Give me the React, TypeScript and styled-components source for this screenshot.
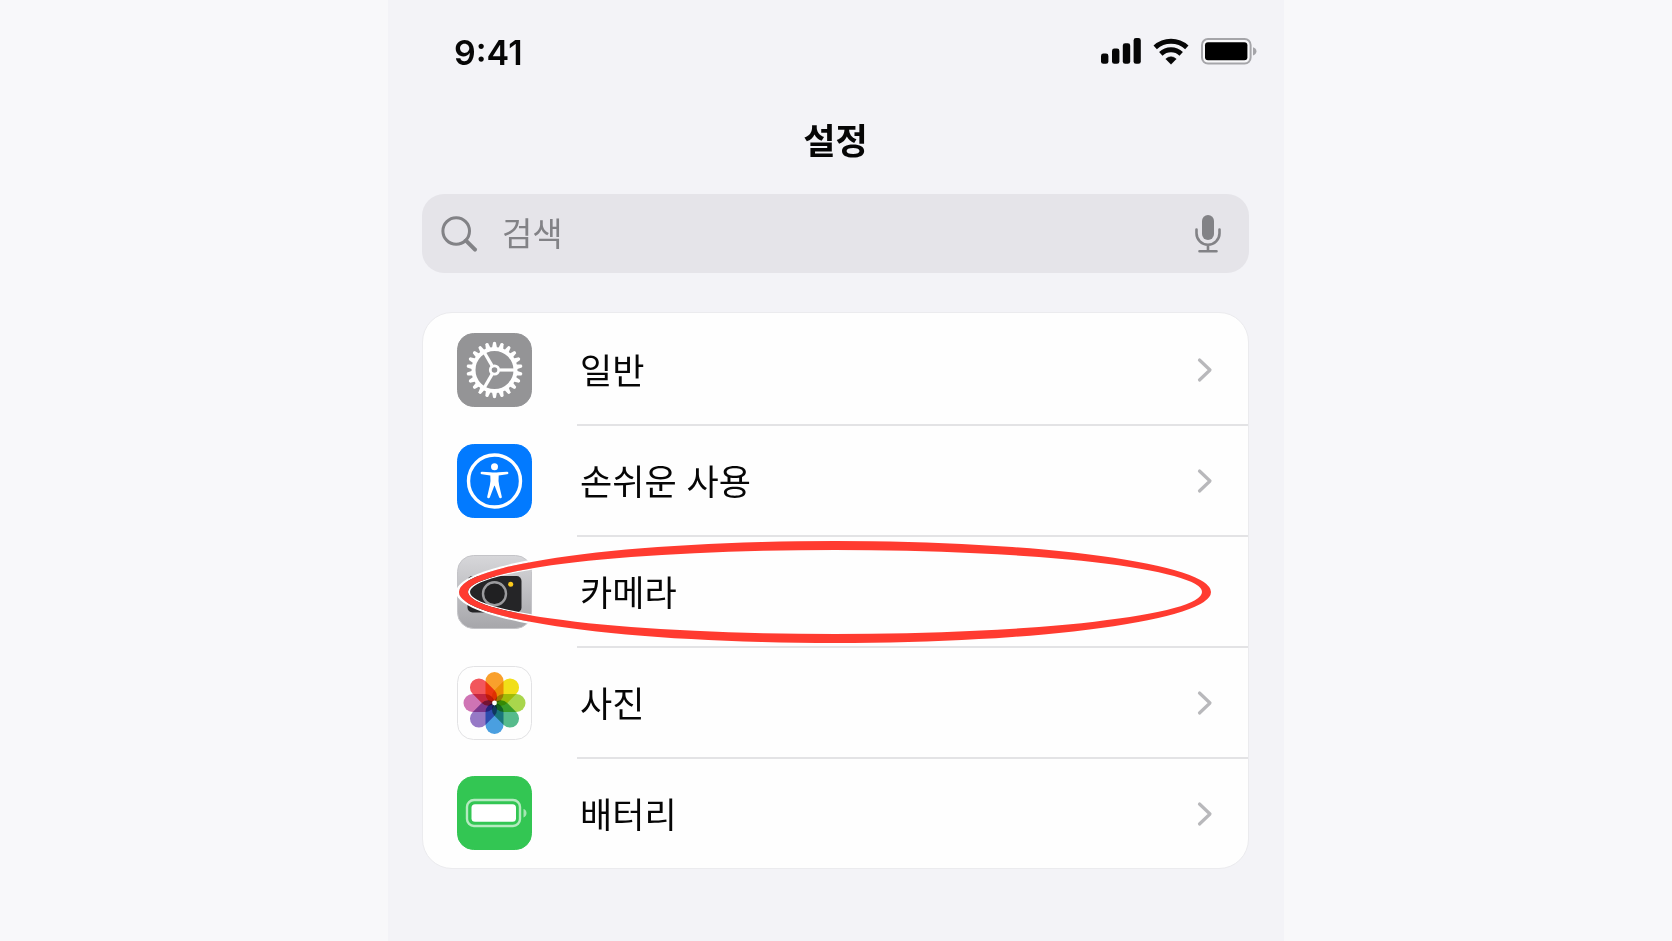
import React from "react";
import styled, { createGlobalStyle } from "styled-components";

const GlobalStyle = createGlobalStyle`
  *, *::before, *::after { box-sizing: border-box; }
  body {
    margin: 0;
    background: #f8f8fa;
    color: #060606;
    font-family: Inter, "Noto Sans CJK KR", sans-serif;
  }
`;

const Screen = styled.main`
  width: 100%;
  max-width: 896px;
  min-height: 100vh;
  margin: 0 auto;
  padding: 0 35px 72px 34px;
  background: #f3f3f7;
`;

const StatusBar = styled.header`
  display: flex;
  align-items: center;
  justify-content: space-between;
  padding: 33px 0 0 32px;
  height: 73px;
`;

const Clock = styled.time`
  font-size: 34px;
  line-height: 40px;
  font-weight: 600;
`;

const StatusIcons = styled.div`
  display: flex;
  align-items: center;
  gap: 12px;
  margin: 0 -8px 4px 0;
`;

const Title = styled.h1`
  margin: 44px 0 29px;
  font-size: 35px;
  line-height: 48px;
  font-weight: 700;
  text-align: center;
`;

const SearchField = styled.label`
  display: flex;
  align-items: center;
  height: 79px;
  padding: 0 27px 0 18px;
  border-radius: 22px;
  background: #e5e4e9;
  color: #828286;
`;

const SearchInput = styled.input`
  flex: 1;
  min-width: 0;
  margin: 0 24px;
  padding: 0;
  border: 0;
  outline: 0;
  background: none;
  color: #060606;
  font: inherit;
  font-size: 33px;
  line-height: 48px;
  &::placeholder { color: #828286; opacity: 1; }
`;

const MicButton = styled.button`
  display: flex;
  padding: 0;
  border: 0;
  background: none;
  color: inherit;
`;

const List = styled.ul`
  margin: 39px 0 0;
  padding: 2px 0 0;
  list-style: none;
  border: 1px solid #ebebee;
  border-radius: 30px;
  background: #fefefe;
`;

const Item = styled.li`
  position: relative;
`;

const RowLink = styled.a`
  display: flex;
  align-items: center;
  gap: 45px;
  padding-left: 34px;
  color: inherit;
  text-decoration: none;
`;

const RowBody = styled.span<{ $divided: boolean }>`
  display: flex;
  flex: 1;
  box-sizing: content-box;
  align-items: center;
  justify-content: space-between;
  height: 109px;
  padding: 0 35px 0 3px;
  border-bottom: ${(p) => (p.$divided ? "2px solid #e3e3e5" : "0")};
`;

const RowLabel = styled.span`
  font-size: 35px;
  line-height: 48px;
  padding-top: 2px;
`;

const Highlight = styled.span`
  position: absolute;
  top: 4px;
  left: 36px;
  right: 37px;
  height: 102px;
  border: 9px solid #ff3b30;
  border-radius: 50%;
  box-shadow: 0 0 0 3px #fefefe, inset 0 0 0 2px #fefefe;
  pointer-events: none;
`;

function SignalIcon() {
  return (
    <svg width="40" height="26" viewBox="0 0 40 26" fill="#060606" aria-hidden="true">
      <rect x="0" y="15.5" width="7.4" height="10.3" rx="2.4" />
      <rect x="11" y="10.5" width="7.4" height="15.3" rx="2.4" />
      <rect x="21.8" y="5.3" width="7.4" height="20.5" rx="2.4" />
      <rect x="32.6" y="0" width="7.2" height="25.8" rx="2.4" />
    </svg>
  );
}

function WifiIcon() {
  return (
    <svg width="36" height="27" viewBox="0 0 36 27" aria-hidden="true">
      <g fill="none" stroke="#060606" strokeWidth="5">
        <path d="M2.2 9.3a23.4 23.4 0 0 1 31.6 0" />
        <path d="M7.8 15.8a15 15 0 0 1 20.4 0" />
      </g>
      <path d="M18 26.2l-5.2-5.3q5.2-4.2 10.4 0z" fill="#060606" stroke="#060606" strokeWidth="0.6" strokeLinejoin="round" />
    </svg>
  );
}

function StatusBatteryIcon() {
  return (
    <svg width="56" height="27" viewBox="0 0 56 27" aria-hidden="true">
      <rect x="1" y="1" width="48.6" height="24.6" rx="6" fill="#f8f8fa" stroke="#a5a5a9" strokeWidth="2" />
      <rect x="4" y="4.3" width="42.4" height="18" rx="3" fill="#000" />
      <path d="M52 9.2c4.6 1.2 4.6 7 0 8.2z" fill="#a5a5a9" />
    </svg>
  );
}

function SearchIcon() {
  return (
    <svg width="38" height="38" viewBox="0 0 38 38" fill="none" stroke="currentColor" aria-hidden="true">
      <circle cx="16.2" cy="16" r="13.3" strokeWidth="3" />
      <path d="M26 25.7l9 9" strokeWidth="4" strokeLinecap="round" />
    </svg>
  );
}

function MicIcon() {
  return (
    <svg width="28" height="40" viewBox="0 0 28 40" fill="none" stroke="currentColor" strokeWidth="2.6" strokeLinecap="round" aria-hidden="true">
      <rect x="8" y="1" width="12" height="25" rx="6" fill="currentColor" stroke="none" />
      <path d="M2.5 15.5v3.8a11.5 11.5 0 0 0 23 0v-3.8M14 31v6M5.5 37.3h17" />
    </svg>
  );
}

function Chevron() {
  return (
    <svg width="16" height="26" viewBox="0 0 16 26" fill="none" stroke="#b8b8bb" strokeWidth="3.2" strokeLinecap="round" strokeLinejoin="round" aria-hidden="true">
      <path d="M2.5 3l10.5 10-10.5 10" />
    </svg>
  );
}

const TileSvg = styled.svg`
  flex: none;
  width: 75px;
  height: 74px;
  margin-bottom: 2px;
`;

function Tile({ fill, stroke, children }: { fill: string; stroke?: string; children: React.ReactNode }) {
  return (
    <TileSvg viewBox="0 0 75 74" aria-hidden="true">
      <rect x="0.5" y="0.5" width="74" height="73" rx="16" fill={fill} stroke={stroke ?? fill} />
      {children}
    </TileSvg>
  );
}

function GeneralIcon() {
  const teeth = Array.from({ length: 22 }, (_, i) => (i * 360) / 22);
  return (
    <Tile fill="#949496">
      <g transform="translate(37.5 37)" fill="none" stroke="#fff">
        <circle r="21" strokeWidth="4" />
        {teeth.map((angle) => (
          <path key={angle} d="M-2.5 -22L-1.5 -27.4Q0 -28.9 1.5 -27.4L2.5 -22z" fill="#fff" stroke="none" transform={`rotate(${angle})`} />
        ))}
        <circle r="4.2" strokeWidth="2.8" />
        {[90, 210, 330].map((angle) => (
          <path key={angle} d="M0 -5v-15" strokeWidth="3.2" transform={`rotate(${angle})`} />
        ))}
      </g>
    </Tile>
  );
}

function AccessibilityIcon() {
  return (
    <Tile fill="#027aff">
      <circle cx="37.5" cy="37" r="26" fill="none" stroke="#fff" strokeWidth="3.4" />
      <circle cx="37.5" cy="22.8" r="3.5" fill="#fff" />
      <path
        d="M25 27.7l8.2 0.6q4.3 0.4 8.6 0l8.2-0.6q1.4 0 1.4 1.3t-1.4 1.3l-8.3 1.2q-0.6 6 0.5 10l2.6 11.2q0.2 1.3-1 1.5t-1.7-1l-4.4-11.4h-0.4l-4.4 11.4q-0.5 1.2-1.7 1t-1-1.5l2.6-11.2q1.1-4 0.5-10l-8.3-1.2q-1.4 0-1.4-1.3t1.4-1.3z"
        fill="#fff"
      />
    </Tile>
  );
}

function CameraIcon() {
  return (
    <Tile fill="url(#camera-metal)" stroke="#c4c4c8">
      <defs>
        <linearGradient id="camera-metal" x1="0" y1="0" x2="0" y2="1">
          <stop offset="0" stopColor="#d7d7da" />
          <stop offset="1" stopColor="#a6a6aa" />
        </linearGradient>
      </defs>
      <rect x="10.5" y="21" width="54" height="36.5" rx="5" fill="#252527" />
      <circle cx="37.5" cy="38.8" r="11.5" fill="#202022" stroke="#9b9b9e" strokeWidth="2.4" />
      <circle cx="53.7" cy="29.3" r="2.5" fill="#fdcb1c" />
    </Tile>
  );
}

const petals = ["#f9a02c", "#f1df18", "#a9d64c", "#56bb8c", "#4a9fe0", "#9679c6", "#cf74b4", "#f2565c"];

const Petal = styled.rect`
  mix-blend-mode: multiply;
`;

const Flower = styled.g`
  isolation: isolate;
`;

function PhotosIcon() {
  return (
    <Tile fill="#fefefe" stroke="#e2e2e4">
      <Flower transform="translate(37.5 37)">
        {petals.map((color, i) => (
          <Petal key={color} x="-9" y="-31" width="18" height="31" rx="9" fill={color} transform={`rotate(${i * 45})`} />
        ))}
        <circle r="2.4" fill="#fff" />
      </Flower>
    </Tile>
  );
}

function BatteryIcon() {
  return (
    <Tile fill="#33c653">
      <rect x="10" y="24" width="53" height="26" rx="7" fill="none" stroke="#b5ebc0" strokeWidth="2.4" />
      <rect x="14.5" y="28.3" width="44.5" height="17.5" rx="3.5" fill="#fff" />
      <path d="M66.5 33c4 1 4 7.4 0 8.4z" fill="#a5e6b3" />
    </Tile>
  );
}

const rows = [
  { label: "일반", Icon: GeneralIcon },
  { label: "손쉬운 사용", Icon: AccessibilityIcon },
  { label: "카메라", Icon: CameraIcon, highlighted: true },
  { label: "사진", Icon: PhotosIcon },
  { label: "배터리", Icon: BatteryIcon },
];

export default function App() {
  return (
    <>
      <GlobalStyle />
      <Screen>
        <StatusBar>
          <Clock>9:41</Clock>
          <StatusIcons>
            <SignalIcon />
            <WifiIcon />
            <StatusBatteryIcon />
          </StatusIcons>
        </StatusBar>
        <Title>설정</Title>
        <SearchField>
          <SearchIcon />
          <SearchInput type="text" placeholder="검색" aria-label="검색" />
          <MicButton type="button" aria-label="음성 입력">
            <MicIcon />
          </MicButton>
        </SearchField>
        <List>
          {rows.map(({ label, Icon, highlighted }, i) => (
            <Item key={label}>
              <RowLink href="#">
                <Icon />
                <RowBody $divided={i < rows.length - 1}>
                  <RowLabel>{label}</RowLabel>
                  {!highlighted && <Chevron />}
                </RowBody>
              </RowLink>
              {highlighted && <Highlight aria-hidden="true" />}
            </Item>
          ))}
        </List>
      </Screen>
    </>
  );
}
